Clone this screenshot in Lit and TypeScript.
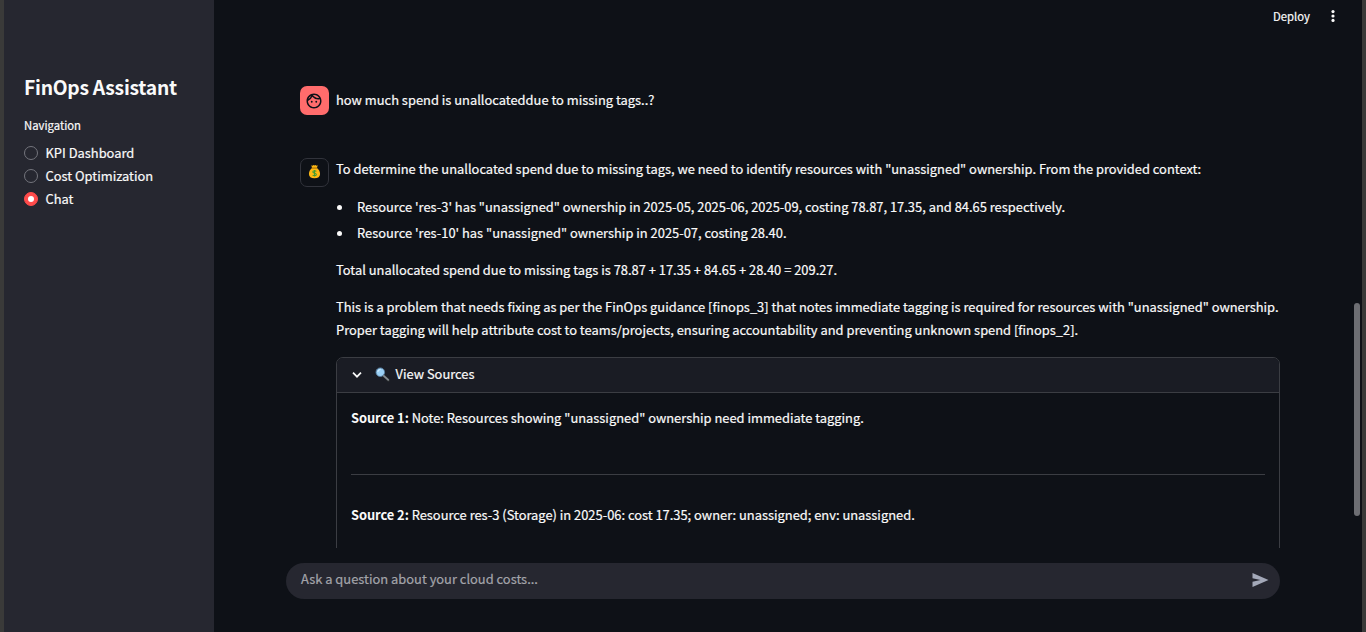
import { LitElement, html, css, svg } from "lit";
import { customElement, state } from "lit/decorators.js";
import { classMap } from "lit/directives/class-map.js";

const face = svg`<path fill="#0e1117" d="M10.25 13a1.25 1.25 0 1 1-2.5 0 1.25 1.25 0 0 1 2.5 0zM15 11.75a1.25 1.25 0 1 0 0 2.5 1.25 1.25 0 0 0 0-2.5zM22 12c0 5.52-4.48 10-10 10S2 17.52 2 12 6.48 2 12 2s10 4.48 10 10zM10.66 4.12C12.06 6.44 14.6 8 17.5 8c.46 0 .91-.05 1.34-.12C17.44 5.56 14.9 4 12 4c-.46 0-.91.05-1.34.12zM4.42 9.47a8.046 8.046 0 0 0 3.66-4.44 8.046 8.046 0 0 0-3.66 4.44zM20 12c0-.78-.12-1.53-.33-2.24-.7.15-1.42.24-2.17.24a10 10 0 0 1-7.76-3.69A10.016 10.016 0 0 1 4 11.86c.01.04 0 .09 0 .14 0 4.41 3.59 8 8 8s8-3.59 8-8z"/>`;

@customElement("app-root")
export class AppRoot extends LitElement {
  static styles = css`
    :host { display: block; width: 100%; height: 632px; overflow: hidden;
      background: #0e1117; color: #fafafa;
      font: 400 12.9px/23px "Noto Sans CJK SC", "Noto Sans", sans-serif;
      -webkit-text-stroke: 0.2px currentColor; }
    * { box-sizing: border-box; }
    svg { display: block; flex: none; }
    .app { display: flex; height: 632px; border-left: 4px solid #3a3a39; border-right: 4px solid #3a3a39; }
    .side { width: 210px; background: #262730; padding: 73px 20px 0; flex: none; white-space: nowrap; }
    h1 { margin: 0; font-size: 19.3px; line-height: 28px; font-weight: 600; letter-spacing: -.25px; -webkit-text-stroke: 0; }
    .label { font-size: 11.3px; line-height: 20px; margin-top: 14px; margin-bottom: 6px; }
    .opt { display: flex; align-items: center; gap: 7.5px; height: 23px; cursor: pointer; }
    .dot { width: 14px; height: 14px; border-radius: 50%; border: 1px solid #74757d; display: grid; place-items: center; }
    .dot.on { background: #ff4b4b; border-color: #ff4b4b; }
    .dot.on::after { content: ""; width: 6px; height: 6px; border-radius: 50%; background: #fff; }
    .main { flex: 1; min-width: 0; display: flex; flex-direction: column; position: relative; }
    .head { height: 32px; display: flex; justify-content: flex-end; align-items: center; padding-right: 22px; gap: 16px; font-size: 11.3px; flex: none; }
    .log { height: 516px; overflow: hidden; padding: 54px 82px 0 86px; flex: none; white-space: nowrap; }
    .msg { display: flex; gap: 7px; }
    .user { height: 72px; }
    .avatar { width: 29px; height: 29px; border-radius: 7px; display: grid; place-items: center; flex: none; background: #ff6c6c; }
    .avatar svg { margin-right: 1px; }
    .bot { background: #0e1117; border: 1px solid #31333b; }
    .bot svg { margin-bottom: 2px; }
    .body { flex: 1; min-width: 0; }
    .user .body { padding-top: 2px; }
    p { margin: 0 0 14px; }
    .lead { margin: -1px 0 15px; }
    ul { list-style: none; margin: 0 0 14px; padding: 0; }
    li { display: flex; align-items: center; gap: 15px; height: 23px; margin-bottom: 3px; }
    li:last-child { margin-bottom: 0; }
    li::before { content: ""; width: 5px; height: 5px; border-radius: 50%; background: #fafafa; margin-left: 1px; margin-top: 1px; }
    .box { border: 1px solid #3b3d43; border-radius: 7px 7px 0 0; height: 260px; margin-top: 16px; }
    .sum { height: 35px; background: #1a1c24; border-bottom: 1px solid #3b3d43; border-radius: 6px 6px 0 0; display: flex; align-items: center; padding: 0 0 2px 14px; }
    .sum span { padding-bottom: 2px; }
    .glass { margin: 0 5.5px 0 12px; }
    .inner { padding: 13px 14px 0; }
    .inner p { margin: 0; letter-spacing: -.005px; }
    hr { border: 0; height: 1px; background: #3b3d43; margin: 45px 0 28px; }
    b { font-weight: 700; letter-spacing: -.07px; -webkit-text-stroke: 0; }
    .foot { padding: 15px 82px 0 72px; }
    .ask { height: 36px; border-radius: 18px; background: #262730; color: #a3a4aa; display: flex; align-items: center; justify-content: space-between; padding: 0 11px 2px 15px; }
    .ask span { padding-bottom: 3px; }
    .thumb { position: absolute; right: 2px; top: 303px; width: 6px; height: 213px; border-radius: 3px; background: #6d6e73; }
  `;

  @state() private page = "Chat";

  render() {
    return html`<div class="app">
      <aside class="side">
        <h1><span>FinOps Assistant</span></h1>
        <div class="label">Navigation</div>
        ${["KPI Dashboard", "Cost Optimization", "Chat"].map(n => html`
          <div class="opt" @click=${() => (this.page = n)}><span class=${classMap({ dot: true, on: this.page === n })}></span><span>${n}</span></div>`)}
      </aside>
      <main class="main">
        <header class="head"><span>Deploy</span>
          <svg width="14" height="14" viewBox="0 0 14 14" fill="#fafafa"><circle cx="7" cy="2.6" r="1.6"/><circle cx="7" cy="7" r="1.6"/><circle cx="7" cy="11.4" r="1.6"/></svg>
        </header>
        <section class="log">
          <div class="msg user">
            <div class="avatar"><svg width="18" height="18" viewBox="0 0 24 24">${face}</svg></div>
            <div class="body"><span>how much spend is unallocateddue to missing tags..?</span></div>
          </div>
          <div class="msg">
            <div class="avatar bot"><svg width="13" height="15" viewBox="0 0 14 16">
              <path d="M3.6 1.2l1.4.5 1-.8 1 .6 1-.6 1 .8 1.4-.5-.7 3C11.6 5.6 13 8 13 10.6c0 3-2.2 4.6-6 4.6s-6-1.6-6-4.6C1 8 2.4 5.6 4.3 4.2z" fill="#fdb813"/>
              <path d="M4.2 4.3h5.6" stroke="#9a6100" stroke-width="1"/>
              <path d="M9 7.8C8 6.9 5.2 7.1 5.2 8.6c0 1.7 3.8.9 3.8 2.6 0 1.5-2.9 1.7-4 .7M7.1 6.3v7" fill="none" stroke="#3c9b35" stroke-width="1.1"/></svg></div>
            <div class="body">
              <p class="lead"><span>To determine the unallocated spend due to missing tags, we need to identify resources with "unassigned" ownership. From the provided context:</span></p>
              <ul><li><span>Resource 'res-3' has "unassigned" ownership in 2025-05, 2025-06, 2025-09, costing 78.87, 17.35, and 84.65 respectively.</span></li>
                <li><span>Resource 'res-10' has "unassigned" ownership in 2025-07, costing 28.40.</span></li></ul>
              <p><span>Total unallocated spend due to missing tags is 78.87 + 17.35 + 84.65 + 28.40 = 209.27.</span></p>
              <p><span>This is a problem that needs fixing as per the FinOps guidance [finops_3] that notes immediate tagging is required for resources with "unassigned" ownership.</span><br>
                <span>Proper tagging will help attribute cost to teams/projects, ensuring accountability and preventing unknown spend [finops_2].</span></p>
              <div class="box">
                <div class="sum">
                  <svg width="12" height="12" viewBox="0 0 12 12"><path d="M2 4.7l4 4 4-4" fill="none" stroke="#fafafa" stroke-width="1.7"/></svg>
                  <svg class="glass" width="15" height="15" viewBox="0 0 15 15"><path d="M8.8 8.8l4.7 4.4" stroke="#26292c" stroke-width="3.2" stroke-linecap="round"/><path d="M8.8 8.8l4.4 4.1" stroke="#858b90" stroke-width="1.8" stroke-linecap="round"/><circle cx="5.3" cy="5.2" r="4.3" fill="#9bd0f5" stroke="#55799a" stroke-width=".9"/><path d="M2.8 5a2.8 2.8 0 0 1 2.7-2.5" fill="none" stroke="#d9f0ff" stroke-width="1"/></svg>
                  <span>View Sources</span>
                </div>
                <div class="inner">
                  <p><span><b>Source 1:</b> Note: Resources showing "unassigned" ownership need immediate tagging.</span></p>
                  <hr>
                  <p><span><b>Source 2:</b> Resource res-3 (Storage) in 2025-06: cost 17.35; owner: unassigned; env: unassigned.</span></p>
                </div>
              </div>
            </div>
          </div>
        </section>
        <footer class="foot"><div class="ask"><span>Ask a question about your cloud costs...</span>
          <svg width="17" height="16" viewBox="0 0 17 16"><path d="M.5 1L16.5 8 .5 15V9.7L8.5 8 .5 6.3z" fill="#a3a8b8"/></svg></div></footer>
        <div class="thumb"></div>
      </main>
    </div>`;
  }
}
